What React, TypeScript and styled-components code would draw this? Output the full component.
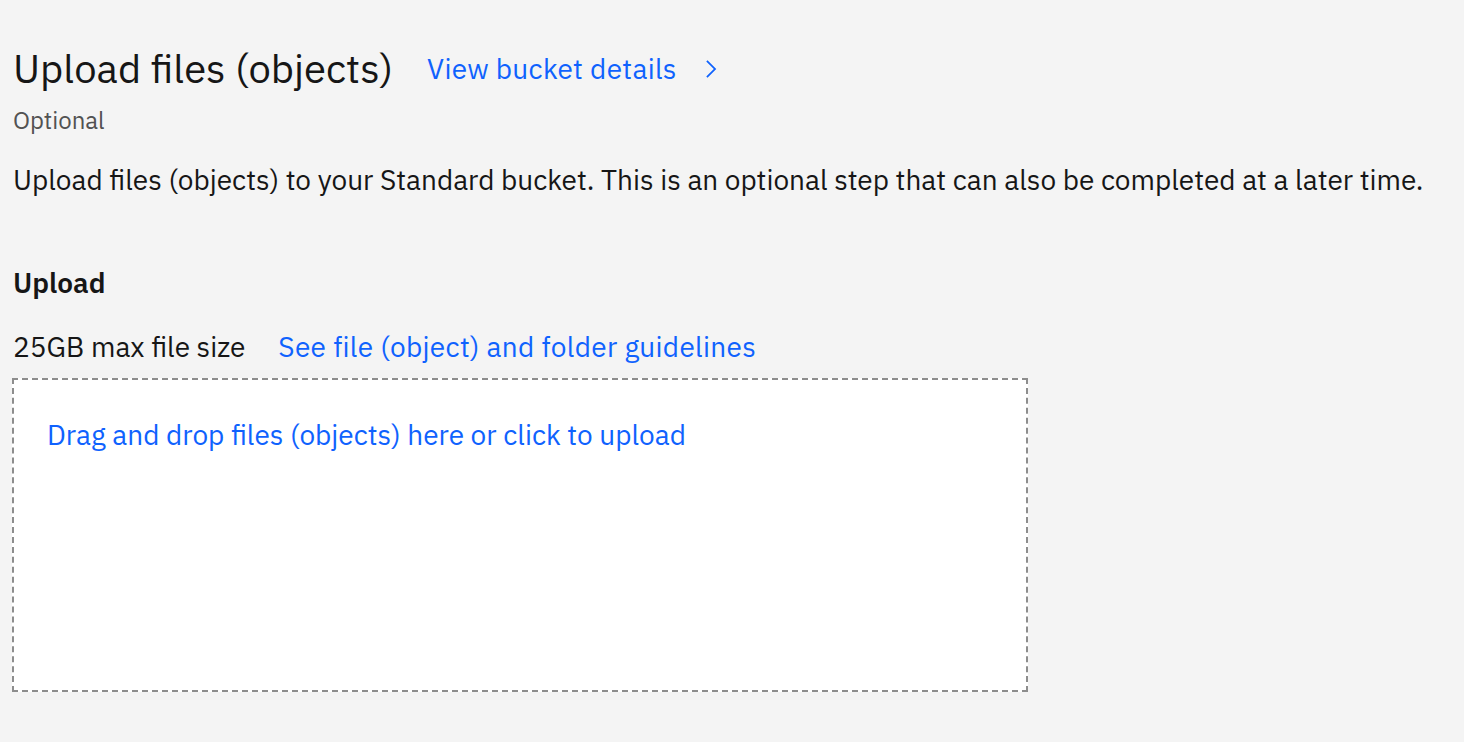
import React from "react";
import styled, { createGlobalStyle } from "styled-components";

const Global = createGlobalStyle`
  html, body { margin: 0; padding: 0; background: #f4f4f4; }
  body { font-family: "IBM Plex Sans", "Open Sans", sans-serif; color: #161616; }
`;

const Page = styled.div`
  padding: 45px 13px 0 13px;
  display: flex;
  flex-direction: column;
`;

const TitleRow = styled.div`
  display: flex;
  align-items: center;
  gap: 34px;
  height: 48px;
`;

const Title = styled.h1`
  margin: -3px 0 0 0;
  font-size: 40px;
  font-weight: 400;
  line-height: 48px;
  color: #161616;
`;

const HeaderLink = styled.a`
  display: inline-flex;
  align-items: center;
  gap: 20px;
  font-size: 28px;
  line-height: 40px;
  letter-spacing: 0.28px;
  color: #0f62fe;
  text-decoration: none;
  cursor: pointer;
`;

const Optional = styled.div`
  font-size: 24px;
  line-height: 32px;
  color: #525252;
  margin-top: 11px;
`;

const Description = styled.p`
  margin: 24px 0 0 0;
  font-size: 28px;
  line-height: 40px;
  color: #161616;
`;

const SectionLabel = styled.div`
  margin-top: 65px;
  font-size: 28px;
  font-weight: 600;
  line-height: 36px;
`;

const MetaRow = styled.div`
  margin-top: 26px;
  display: flex;
  align-items: baseline;
  gap: 33px;
  font-size: 28px;
  line-height: 40px;
`;

const Link = styled.a`
  color: #0f62fe;
  letter-spacing: 0.3px;
  text-decoration: none;
  cursor: pointer;
`;

const DropZone = styled.div`
  box-sizing: border-box;
  margin: 11px 0 0 -1px;
  width: 1016px;
  height: 314px;
  background: #ffffff;
  border: 2px dashed #8d8d8d;
  padding: 35px 33px;
  font-size: 28px;
  line-height: 40px;
  color: #0f62fe;
  cursor: pointer;
`;

const Chevron = () => (
  <svg width="28" height="28" viewBox="0 0 16 16" fill="#0f62fe">
    <path d="M11 8L6 13 5.3 12.3 9.6 8 5.3 3.7 6 3z" />
  </svg>
);

export default function App() {
  return (
    <>
      <Global />
      <Page>
        <TitleRow>
          <Title>Upload files (objects)</Title>
          <HeaderLink>
            View bucket details
            <Chevron />
          </HeaderLink>
        </TitleRow>
        <Optional>Optional</Optional>
        <Description>
          Upload files (objects) to your Standard bucket. This is an optional step that can also be completed at a later time.
        </Description>
        <SectionLabel>Upload</SectionLabel>
        <MetaRow>
          <span>25GB max file size</span>
          <Link>See file (object) and folder guidelines</Link>
        </MetaRow>
        <DropZone>Drag and drop files (objects) here or click to upload</DropZone>
      </Page>
    </>
  );
}
